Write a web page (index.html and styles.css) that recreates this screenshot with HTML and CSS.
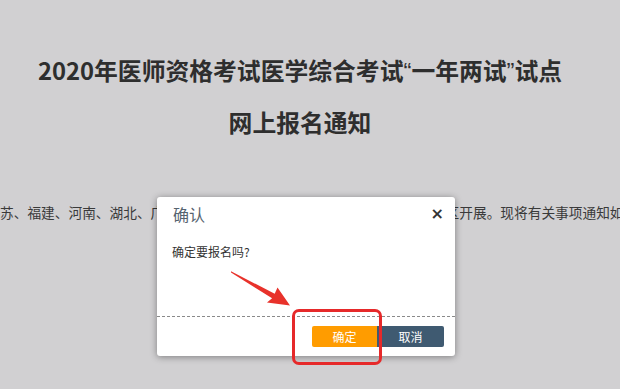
FILE: index.html
```html
<!DOCTYPE html>
<html lang="zh-CN">
<head>
<meta charset="utf-8">
<title>网上报名通知</title>
<link rel="stylesheet" href="styles.css">
</head>
<body>
<div class="page">
  <div class="title">
    <div class="title-line">2020年医师资格考试医学综合考试<span class="q">“</span>一年两试<span class="q">”</span>试点</div>
    <div class="title-line">网上报名通知</div>
  </div>
  <p class="text">苏、福建、河南、湖北、广西、四川、云南、陕西、贵州等8个省份试点地区开展。现将有关事项通知如下：</p>
</div>

<div class="dialog">
  <div class="dialog-head">
    <span class="dialog-title">确认</span>
    <span class="dialog-close">×</span>
  </div>
  <div class="dialog-body">确定要报名吗?</div>
  <div class="dialog-foot">
    <button class="btn btn-ok">确定</button>
    <button class="btn btn-cancel">取消</button>
  </div>
</div>

<svg class="arrow" width="620" height="389" viewBox="0 0 620 389">
  <polygon points="231,271.2 274.7,293.8 277.5,287.6 290,305.5 267,302.6 272.1,298.2 231,272.6" fill="#e8322b"/>
</svg>
<div class="highlight"></div>
</body>
</html>
```
FILE: styles.css
```css
html, body {
  margin: 0;
  padding: 0;
}
body {
  width: 620px;
  height: 389px;
  overflow: hidden;
  background: #d1d0d2;
  font-family: "Noto Sans CJK SC", "Noto Sans", sans-serif;
  position: relative;
}
.page {
  padding-top: 44px;
}
.title {
  padding-right: 20px;
  text-align: center;
  color: #2e2e2e;
  font-weight: 700;
  font-size: 23.8px;
}
.title-line {
  height: 52px;
  line-height: 52px;
  white-space: nowrap;
}
.q {
  font-family: "Liberation Sans", sans-serif;
  font-weight: 400;
}
.text {
  margin: 54px 0 0 0;
  height: 20px;
  line-height: 20px;
  font-size: 13.7px;
  color: #3a3a3a;
  white-space: nowrap;
  overflow: hidden;
}
.dialog {
  position: absolute;
  left: 157px;
  top: 197px;
  width: 298px;
  height: 159px;
  background: #fff;
  border-radius: 3px;
  box-shadow: 0 1px 7px rgba(0,0,0,0.4);
  display: flex;
  flex-direction: column;
  box-sizing: border-box;
}
.dialog-head {
  height: 34px;
  padding: 0 11px 0 16px;
  display: flex;
  align-items: center;
  justify-content: space-between;
}
.dialog-title {
  font-size: 16px;
  color: #56636f;
}
.dialog-close {
  font-family: "DejaVu Sans", sans-serif;
  font-size: 16px;
  font-weight: 700;
  color: #333;
  line-height: 1;
}
.dialog-body {
  flex: 1;
  padding: 13px 15px 0 15px;
  font-size: 12px;
  line-height: 16px;
  color: #333;
}
.dialog-foot {
  border-top: 1px dashed #8a8a8a;
  height: 40px;
  padding: 9px 11px 0 0;
  box-sizing: border-box;
  display: flex;
  justify-content: flex-end;
  align-items: flex-start;
}
.btn {
  border: 0;
  margin: 0;
  height: 21px;
  padding: 0;
  font-family: "Noto Sans CJK SC", sans-serif;
  font-size: 12px;
  color: #fff;
}
.btn-ok {
  background: #ff9c00;
  border-radius: 2px 0 0 2px;
  width: 65px;
}
.btn-cancel {
  background: #3f5a71;
  border-radius: 0 2px 2px 0;
  width: 67px;
}
.arrow {
  position: absolute;
  left: 0;
  top: 0;
}
.highlight {
  position: absolute;
  left: 292px;
  top: 309px;
  width: 90px;
  height: 56px;
  box-sizing: border-box;
  border: 3px solid #e6292a;
  border-radius: 7px;
}
```
